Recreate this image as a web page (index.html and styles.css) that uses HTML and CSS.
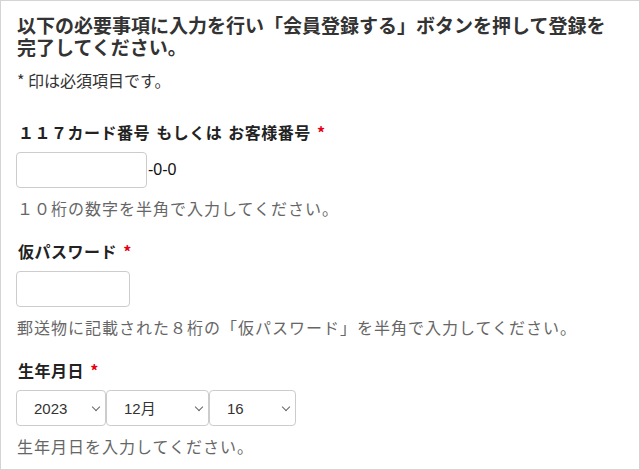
FILE: index.html
```html
<!DOCTYPE html>
<html lang="ja">

<head>
    <meta charset="UTF-8">
    <meta name="viewport" content="width=device-width, initial-scale=1.0">
    <title>会員登録</title>
    <link rel="stylesheet" href="styles.css">
</head>

<body>
    <div class="page">
        <h1 class="lead">以下の必要事項に入力を行い「会員登録する」ボタンを押して登録を完了してください。</h1>
        <p class="note">* 印は必須項目です。</p>

        <div class="field first">
            <label class="label" for="card">１１７カード番号 もしくは お客様番号 <span class="req">*</span></label>
            <div class="row">
                <input type="text" id="card" class="text card">
                <span class="suffix">-0-0</span>
            </div>
            <p class="help">１０桁の数字を半角で入力してください。</p>
        </div>

        <div class="field">
            <label class="label" for="pass">仮パスワード <span class="req">*</span></label>
            <div class="row">
                <input type="password" id="pass" class="text pass">
            </div>
            <p class="help">郵送物に記載された８桁の「仮パスワード」を半角で入力してください。</p>
        </div>

        <div class="field">
            <label class="label" for="year">生年月日 <span class="req">*</span></label>
            <div class="row">
                <span class="select year">
                    <select id="year">
                        <option>2023</option>
                    </select>
                </span>
                <span class="select month">
                    <select>
                        <option>12月</option>
                    </select>
                </span>
                <span class="select day">
                    <select>
                        <option>16</option>
                    </select>
                </span>
            </div>
            <p class="help">生年月日を入力してください。</p>
        </div>
    </div>
</body>

</html>
```

FILE: styles.css
```css
body {
    margin: 0;
    background: #fff;
    font-family: "Noto Sans CJK JP", "Noto Sans", sans-serif;
}

.page {
    box-sizing: border-box;
    width: 640px;
    height: 470px;
    border: 1px solid #d4d4d4;
    padding: 13px 15px 0 15px;
    overflow: hidden;
}

.lead {
    margin: 0 16px 0 1px;
    font-size: 19px;
    line-height: 21.5px;
    font-weight: bold;
    color: #333;
}

.note {
    margin: 13px 0 0 1px;
    font-size: 16px;
    line-height: 20px;
    color: #333;
}

.field {
    margin-top: 22px;
}

.field.first {
    margin-top: 31px;
}

.label {
    display: block;
    font-size: 16px;
    line-height: 22px;
    letter-spacing: 0.5px;
    word-spacing: 2px;
    font-weight: bold;
    color: #222;
    margin: 0 0 9px 2px;
}

.req {
    color: #e60012;
}

.row {
    display: flex;
    align-items: center;
    height: 36px;
}

.text {
    box-sizing: border-box;
    height: 36px;
    border: 1px solid #ccc;
    border-radius: 4px;
    background: #fff;
    padding: 0 8px;
    font-size: 15px;
}

.card {
    width: 131px;
}

.pass {
    width: 114px;
}

.suffix {
    font-family: "Liberation Sans", Arial, sans-serif;
    font-size: 16px;
    color: #111;
    padding-left: 1px;
}

.help {
    margin: 10px 0 0 1px;
    font-size: 16px;
    line-height: 20px;
    letter-spacing: 1px;
    color: #666;
}

.select {
    position: relative;
    display: block;
    height: 36px;
}

.select select {
    -webkit-appearance: none;
    appearance: none;
    box-sizing: border-box;
    width: 100%;
    height: 36px;
    border: 1px solid #ccc;
    border-radius: 4px;
    background: #fff;
    padding: 0 0 0 17px;
    font-family: "Liberation Sans", "Noto Sans CJK JP", sans-serif;
    font-size: 15px;
    color: #333;
}

/* chevron */
.select::after {
    content: "";
    position: absolute;
    right: 7px;
    top: 14px;
    width: 5px;
    height: 5px;
    border-right: 1px solid #666;
    border-bottom: 1px solid #666;
    transform: rotate(45deg);
    pointer-events: none;
}

.year {
    width: 90px;
}

.month {
    width: 103px;
}

.day {
    width: 87px;
}
```
